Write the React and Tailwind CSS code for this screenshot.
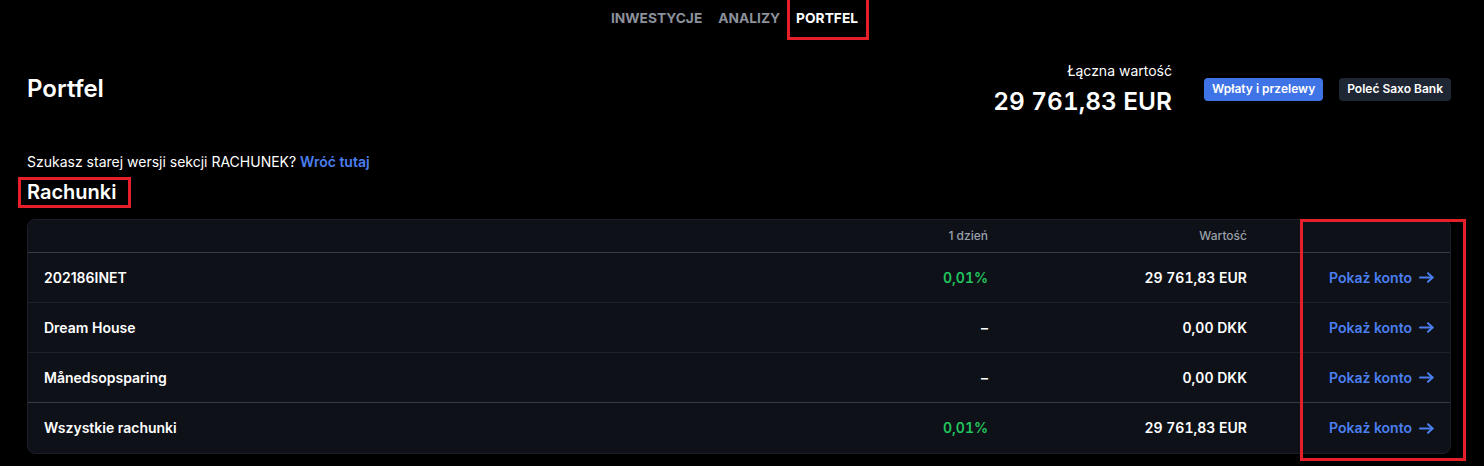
import React from "react";

const rows = [
  { name: "202186INET", day: "0,01%", green: true, value: "29 761,83 EUR" },
  { name: "Dream House", day: "–", green: false, value: "0,00 DKK" },
  { name: "Månedsopsparing", day: "–", green: false, value: "0,00 DKK" },
  { name: "Wszystkie rachunki", day: "0,01%", green: true, value: "29 761,83 EUR", total: true },
];

function Arrow() {
  return (
    <svg width="15" height="11" viewBox="0 0 15 11" fill="none" stroke="currentColor" strokeWidth="2" strokeLinecap="round" strokeLinejoin="round">
      <path d="M1 5.5H13.5" />
      <path d="M9 1.2L13.6 5.5L9 9.8" />
    </svg>
  );
}

function Row({ r, last, nextTotal }) {
  return (
    <div
      className={
        "grid h-[50px] grid-cols-[1fr_200px_259px_203px] items-center text-sm font-semibold " +
        (last ? "" : "border-b " + (nextTotal ? "border-[#363b46]" : "border-[#1d212a]"))
      }
    >
      <div className="pl-4 text-white">{r.name}</div>
      <div className={"text-right tabular-nums " + (r.green ? "text-[#22c55e]" : "text-white")}>{r.day}</div>
      <div className="text-right tabular-nums text-white">{r.value}</div>
      <div className="flex justify-end pr-4">
        <span className="flex items-center gap-[7px] text-[#4b7ff0]">
          Pokaż konto
          <Arrow />
        </span>
      </div>
    </div>
  );
}

export default function App() {
  return (
    <div
      className="min-h-[466px] w-full bg-black text-white"
      style={{ fontFamily: "Inter, 'Noto Sans', sans-serif" }}
    >
      {/* Top nav */}
      <nav className="flex h-[40px] justify-center pr-[15px]">
        <div className="flex items-center gap-4 pb-[3px] text-[13.75px] font-bold uppercase">
          <span className="text-[#8b909b]">Inwestycje</span>
          <span className="text-[#8b909b]">Analizy</span>
          <span className="relative text-white">
            Portfel
            <span className="pointer-events-none absolute -left-[9px] -right-[11px] -top-[13px] -bottom-[11px] border-[3px] border-[#e5202b]" />
          </span>
        </div>
      </nav>

      <div className="ml-[27px] mr-[33px]">
        {/* Header */}
        <div className="mt-[21px] flex items-center justify-between">
          <h1 className="text-2xl font-semibold leading-8">Portfel</h1>
          <div className="flex items-center">
            <div className="flex flex-col items-end gap-1">
              <span className="text-sm leading-5 text-white">Łączna wartość</span>
              <span className="text-[24.4px] font-semibold leading-8 tabular-nums">29 761,83 EUR</span>
            </div>
            <div className="ml-8 flex items-center gap-4">
              <button className="flex h-[23px] items-center rounded-[4px] bg-[#3f74e6] px-2 text-xs font-semibold text-white">
                Wpłaty i przelewy
              </button>
              <button className="flex h-[23px] items-center rounded-[4px] bg-[#1f2633] px-2 text-xs font-semibold text-white">
                Poleć Saxo Bank
              </button>
            </div>
          </div>
        </div>

        {/* Old version note */}
        <p className="mt-[35px] text-sm leading-5">
          Szukasz starej wersji sekcji RACHUNEK?{" "}
          <span className="font-semibold text-[#4b7ff0]">Wróć tutaj</span>
        </p>

        <h2 className="-ml-[9px] mt-[5px] inline-block border-[3px] border-[#e5202b] pl-[6px] pr-[12px] text-xl font-semibold leading-[25px]">
          Rachunki
        </h2>

        {/* Table */}
        <div className="relative mt-[11px]">
          <div className="overflow-hidden rounded-lg border border-[#1a1e27] bg-[#0e1118]">
            <div className="grid h-[33px] grid-cols-[1fr_200px_259px_203px] items-center border-b border-[#363b46] text-xs font-medium text-[#9aa0aa]">
              <div />
              <div className="text-right">1 dzień</div>
              <div className="text-right">Wartość</div>
              <div />
            </div>
            {rows.map((r, i) => (
              <Row
                key={r.name}
                r={r}
                last={i === rows.length - 1}
                nextTotal={rows[i + 1] && rows[i + 1].total}
              />
            ))}
          </div>
          <div className="pointer-events-none absolute -bottom-[7px] -right-[15px] top-0 w-[166px] border-[3px] border-[#e5202b]" />
        </div>
      </div>
    </div>
  );
}
